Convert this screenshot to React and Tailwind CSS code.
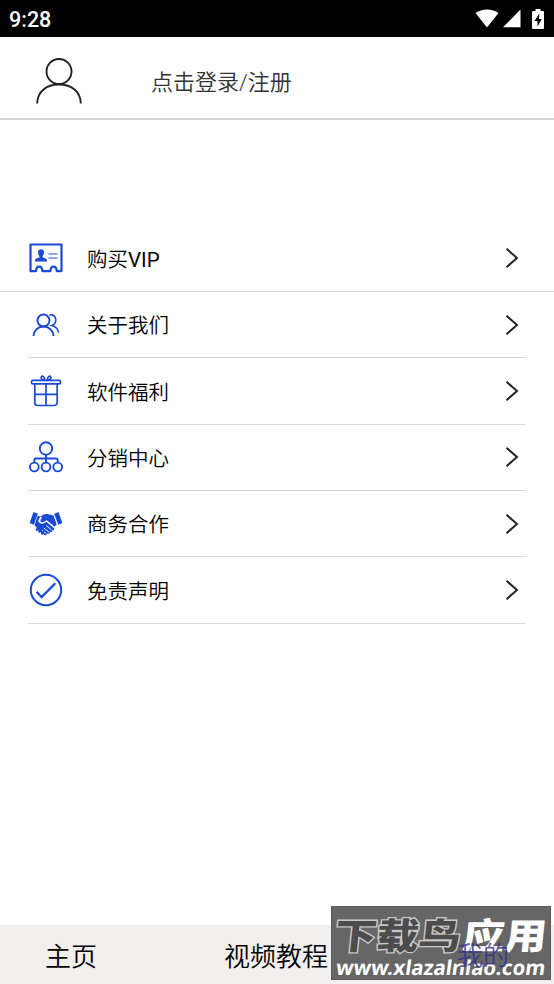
import React from 'react';

const VipIcon = () => (
  <svg width="34" height="30" viewBox="0 0 34 30" fill="none" stroke="#1a4ad4" strokeWidth="2.200">
    <path d="M1.500 1.500h31v26.600h-4.800c0-6-6.200-6-6.200 0h-8.200c0-6-6.200-6-6.200 0H1.500z" strokeLinejoin="round" />
    <ellipse cx="12" cy="9.700" rx="3" ry="3.400" fill="#1a4ad4" stroke="none" />
    <path d="M5.800 18.500c0-2.600 2.800-3.600 4.600-3.900V12h3.200v2.600c1.800.3 4.600 1.300 4.600 3.900z" fill="#1a4ad4" stroke="none" />
    <path d="M19.500 11h9M19.500 15h9" strokeWidth="1.200" />
  </svg>
);

const UsersIcon = () => (
  <svg width="28" height="24" viewBox="0 0 28 24" fill="none" stroke="#1a4ad4" strokeWidth="1.900">
    <circle cx="11.500" cy="7.500" r="6" />
    <path d="M1.500 23c.3-5.500 4.500-9.500 10-9.500s9.700 4 10 9.500" />
    <path d="M17.500 2c4-.8 6.300 1.700 6.300 5 0 2.600-1.500 4.700-4 5.500 3.800 1 6.200 3.500 6.700 7" strokeWidth="1.600" />
  </svg>
);

const GiftIcon = () => (
  <svg width="32" height="32" viewBox="0 0 32 32" fill="none" stroke="#1a4ad4" strokeWidth="1.700">
    <rect x="1.500" y="5.300" width="29" height="3.600" rx="1.500" />
    <path d="M4.800 8.900v18.600a3 3 0 0 0 3 3h16.400a3 3 0 0 0 3-3V8.900M16 8.900v21.600M4.800 19.300h22.400" />
    <path d="M14.800 5.300c-2.500 0-4.300-2-3.500-3.500s3.500 0 3.500 3.500zM17.200 5.300c2.500 0 4.300-2 3.500-3.500s-3.500 0-3.500 3.500z" />
  </svg>
);

const NetworkIcon = () => (
  <svg width="34" height="32" viewBox="0 0 34 32" fill="none" stroke="#1a4ad4" strokeWidth="1.900">
    <circle cx="17" cy="7.500" r="6.200" />
    <circle cx="5.300" cy="26" r="4.400" />
    <circle cx="17" cy="26" r="4.400" />
    <circle cx="28.700" cy="26" r="4.400" />
    <path d="M17 13.700v7.900M5.300 21.600V19q0-1.500 1.500-1.500h20.400q1.500 0 1.500 1.500v2.600" />
  </svg>
);

const HandshakeIcon = () => (
  <svg width="34" height="26" viewBox="0 0 34 26">
    <path d="M4.500 1l4.300 1.800-4 11L.6 12zM29.500 1l-4.300 1.800 4 11 4.200-1.800z" fill="#1a4ad4" />
    <path d="M11.500 5.500C14 3.300 17 2.600 19.500 3.200l5 1.200 3.200 9-2.200 2.300-7.800-6.400c-2.200 2.100-4.500 2.600-5.800 1.600-1-.9-.2-2.500 1.300-4.300z" fill="#1a4ad4" />
    <path d="M8.700 4.700l2.700.8c-2 3-2.400 4.700-1.200 6.100 1.800 1.700 4.800 1.100 7.100-.9l7.600 6.200c1.200 1.400-.3 3-1.700 2.100.7 1.500-1.100 2.900-2.400 1.800.4 1.500-1.500 2.600-2.700 1.600.1 1.300-1.500 2.300-2.700 1.500l-5-3.400L5.500 14z" fill="#1a4ad4" />
    <path d="M11.800 6c-2 2.900-2.300 4.300-1.100 5.300 1.900 1.500 4.500.6 6.700-1.500l8 6.500" stroke="#fff" strokeWidth="1" fill="none" />
    <path d="M17 14.500l5.600 4.300M14.700 17l5.300 4M12.700 19.200l4.700 3.400" stroke="#fff" strokeWidth=".9" />
    <path d="M9.200 16.800l-1.500 2M11.700 18.600l-1.500 2M14.200 20.800l-1.300 1.900" stroke="#1a4ad4" strokeWidth="2.200" strokeLinecap="round" />
  </svg>
);

const CheckIcon = () => (
  <svg width="34" height="34" viewBox="0 0 34 34" fill="none" stroke="#1a4ad4" strokeWidth="2">
    <circle cx="17" cy="17" r="15.200" />
    <path d="M7.600 18.800l5 5.200L26.300 10.300" strokeWidth="2.300" />
  </svg>
);

const menuItems = [
  { label: '购买', suffix: 'VIP', icon: VipIcon },
  { label: '关于我们', icon: UsersIcon },
  { label: '软件福利', icon: GiftIcon },
  { label: '分销中心', icon: NetworkIcon },
  { label: '商务合作', icon: HandshakeIcon },
  { label: '免责声明', icon: CheckIcon },
];

const StatusBar = () => (
  <div className="flex h-[37px] items-center justify-between bg-black px-[9px] text-white">
    <span className="pt-0.5 font-[Roboto] text-[21.500px] font-medium leading-none">9:28</span>
    <div className="flex items-center">
      <svg width="24" height="19" viewBox="0 0 24 19" fill="#fff">
        <path d="M.5 4C7-.8 17-.8 23.500 4L12 18.500z" />
      </svg>
      <svg className="ml-1" width="18" height="19" viewBox="0 0 18 19" fill="#fff">
        <path d="M17.500.5V18.300H0z" />
      </svg>
      <svg className="ml-[11px] mr-px" width="12" height="20" viewBox="0 0 12 20">
        <path d="M3.500 0h5v2H11q1 0 1 1v16q0 1-1 1H1q-1 0-1-1V3q0-1 1-1h2.500z" fill="#fff" />
        <path d="M7.300 4.500L2.500 12h3v5.500L9.800 10H7z" fill="#000" />
      </svg>
    </div>
  </div>
);

const Watermark = () => (
  <div className="absolute left-[331px] top-[906px] h-[74px] w-[220px] border border-[#5c5c5c] bg-[#666666]">
    <svg className="-ml-px -mt-px" width="220" height="74" viewBox="0 0 220 74">
      <g fontFamily="'Noto Sans CJK SC', sans-serif" fontWeight="900" fontSize="36" transform="skewX(-6)">
        <text x="7" y="43" textLength="126" lengthAdjust="spacingAndGlyphs" fill="#4c4c4c" stroke="#c8c8c8" strokeWidth="2.600" paintOrder="stroke">下载鸟</text>
        <text x="135" y="43" textLength="84" lengthAdjust="spacingAndGlyphs" fill="#fff">应用</text>
      </g>
      <text x="6" y="69" textLength="209" lengthAdjust="spacingAndGlyphs" fill="#fff" fontFamily="'Noto Sans', sans-serif" fontWeight="700" fontSize="20.500" transform="skewX(-8) translate(8 0)">www.xlazalnlao.com</text>
    </svg>
    <span className="absolute left-[125px] top-[30px] text-[26px] font-[350] leading-[38px] text-[#30308c] opacity-80">我的</span>
  </div>
);

const App = () => {
  return (
    <div className="relative flex h-[984px] w-[554px] flex-col overflow-hidden bg-white font-[Roboto,'Noto_Sans_CJK_SC',sans-serif] text-black">
      <StatusBar />

      {/* Login header */}
      <div className="flex h-[83px] items-center border-b-2 border-[#d8d8d8] pl-9">
        <svg className="mt-[7px]" width="46" height="46" viewBox="0 0 46 46" fill="none" stroke="#222" strokeWidth="1.900">
          <circle cx="23" cy="13.500" r="12.500" />
          <path d="M1.200 45.500C1.200 34 10 26.500 23 26.500S44.800 34 44.800 45.500" />
        </svg>
        <span className="ml-[69px] mt-2.5 text-[22px] font-[350] text-[#333]">点击登录/注册</span>
      </div>

      {/* Menu */}
      <div className="mt-[105.500px]">
        {menuItems.map(({ label, suffix, icon: Icon }, index) => (
          <div key={label} className={index === 0 ? '' : 'px-7'}>
            <div className={`flex h-[66.400px] items-center border-b border-[#d8d8d8] ${index === 0 ? 'px-7' : ''}`}>
              <div className="flex w-9 justify-center">
                <Icon />
              </div>
              <span className="ml-[23px] pt-1 text-[20.500px] font-[350]">
                {label}
                {suffix && <span className="font-normal">{suffix}</span>}
              </span>
              <svg className="ml-auto mr-[7px]" width="14" height="22" viewBox="0 0 14 22" fill="none" stroke="#222" strokeWidth="1.900">
                <path d="M1.500 1.800L12 11 1.500 20.200" />
              </svg>
            </div>
          </div>
        ))}
      </div>

      {/* Bottom tabs */}
      <div className="mt-auto flex h-[59px] items-center bg-[#f1eeed] pl-[45px] pt-1.5 text-[26px] font-[350]">
        <span>主页</span>
        <span className="ml-[127px]">视频教程</span>
      </div>

      <Watermark />
    </div>
  );
};

export default App;
